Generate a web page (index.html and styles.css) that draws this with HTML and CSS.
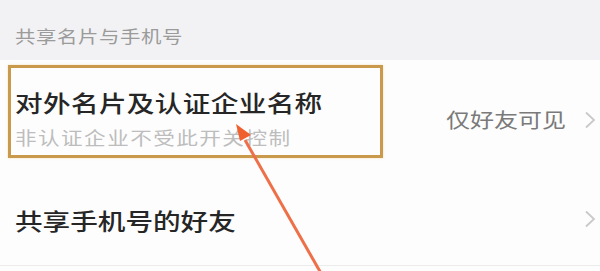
FILE: index.html
```html
<!DOCTYPE html>
<html lang="zh-CN">
<head>
<meta charset="utf-8">
<link rel="stylesheet" href="styles.css">
</head>
<body>
<div class="page">
  <div class="section-head"><span class="wide">共享名片与手机号</span></div>
  <div class="row row-card">
    <div class="row-main">
      <div class="title"><span class="wide">对外名片及认证企业名称</span></div>
      <div class="sub"><span class="wide">非认证企业不受此开关控制</span></div>
    </div>
    <div class="row-side">
      <span class="value">仅好友可见</span>
      <svg class="chev" width="12" height="18" viewBox="0 0 12 18"><path d="M2 1.5 L10 9 L2 16.5" fill="none" stroke="#c9c9c9" stroke-width="1.8"/></svg>
    </div>
  </div>
  <div class="row row-phone">
    <div class="title2"><span class="wide">共享手机号的好友</span></div>
    <div class="row-side">
      <svg class="chev" width="12" height="18" viewBox="0 0 12 18"><path d="M2 1.5 L10 9 L2 16.5" fill="none" stroke="#c9c9c9" stroke-width="1.8"/></svg>
    </div>
  </div>
  <div class="highlight"></div>
  <svg class="arrow" width="600" height="271" viewBox="0 0 600 271">
    <line x1="245" y1="140" x2="322" y2="275" stroke="#ee7049" stroke-width="3"/>
    <polygon points="236,124 251,135 240,141" fill="#f0602f"/>
  </svg>
</div>
</body>
</html>
```

FILE: styles.css
```css
html, body {
  margin: 0;
  padding: 0;
  background: #fdfdfd;
}
.page {
  position: relative;
  width: 600px;
  height: 271px;
  overflow: hidden;
  font-family: "Noto Sans CJK SC", "Noto Sans", sans-serif;
}
.wide {
  display: inline-block;
  transform: scaleX(1.2);
  transform-origin: left center;
  white-space: nowrap;
}
.section-head {
  box-sizing: border-box;
  height: 60px;
  padding: 26px 0 0 15px;
  background: #f2f2f4;
  color: #9b9b9b;
  font-size: 17px;
  line-height: 20px;
  letter-spacing: 0.5px;
}
.row {
  display: flex;
  align-items: center;
  justify-content: space-between;
  padding: 0 4px 0 15px;
  background: #fdfdfd;
}
.row-card {
  height: 112px;
  align-items: flex-start;
}
.row-main {
  padding-top: 27px;
}
.title {
  font-size: 23px;
  line-height: 30px;
  letter-spacing: 0.3px;
  color: #262626;
  font-weight: 500;
}
.sub {
  margin-top: 8px;
  font-size: 18px;
  line-height: 24px;
  letter-spacing: 1.2px;
  color: #bdbdbd;
}
.row-side {
  display: flex;
  align-items: center;
  gap: 18px;
}
.row-card .row-side {
  padding-top: 48px;
}
.value {
  display: inline-block;
  font-size: 20px;
  line-height: 24px;
  color: #7a7a7a;
  transform: scaleX(1.2);
  transform-origin: right center;
}
.row-phone {
  box-sizing: border-box;
  height: 94px;
  border-bottom: 1px solid #ececec;
}
.title2 {
  font-size: 23px;
  line-height: 30px;
  color: #262626;
  font-weight: 500;
  padding-top: 3px;
}
.chev {
  display: block;
}
.highlight {
  position: absolute;
  left: 8px;
  top: 65px;
  width: 369px;
  height: 87px;
  border: 3px solid #c99a4c;
  box-shadow: 0 0 2px rgba(230, 190, 110, 0.5);
}
.arrow {
  position: absolute;
  left: 0;
  top: 0;
}
```
